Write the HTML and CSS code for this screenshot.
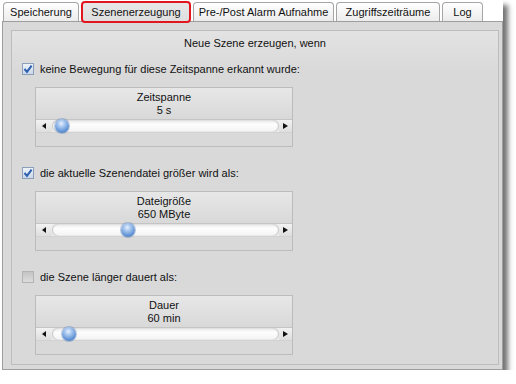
FILE: index.html
```html
<!DOCTYPE html>
<html lang="de">
<head>
  <meta charset="UTF-8" />
  <title>Szenenerzeugung</title>
  <link rel="stylesheet" href="styles.css">
</head>
<body>
  <div class="window">
    <div class="tabs">
      <div class="tab tab-store">Speicherung</div>
      <div class="tab active">Szenenerzeugung</div>
      <div class="tab tab-alarm">Pre-/Post Alarm Aufnahme</div>
      <div class="tab tab-access">Zugriffszeiträume</div>
      <div class="tab tab-log">Log</div>
    </div>

    <div class="panel">
      <div class="frame">
        <div class="frame-title">Neue Szene erzeugen, wenn</div>

        <!-- Zeitspanne -->
        <div class="option">
          <span class="check on"><svg width="10" height="10" viewBox="0 0 10 10"><path d="M1.5 5 L4 7.8 L8.6 1.6" /></svg></span>
          <span>keine Bewegung für diese Zeitspanne erkannt wurde:</span>
        </div>
        <div class="group">
          <div class="group-line">Zeitspanne</div>
          <div class="group-line">5 s</div>
          <div class="slider">
            <span class="step left"></span>
            <div class="track"><span class="thumb" style="left: 3px"></span></div>
            <span class="step right"></span>
          </div>
        </div>

        <!-- Dateigröße -->
        <div class="option">
          <span class="check on"><svg width="10" height="10" viewBox="0 0 10 10"><path d="M1.5 5 L4 7.8 L8.6 1.6" /></svg></span>
          <span>die aktuelle Szenendatei größer wird als:</span>
        </div>
        <div class="group">
          <div class="group-line">Dateigröße</div>
          <div class="group-line">650 MByte</div>
          <div class="slider">
            <span class="step left"></span>
            <div class="track"><span class="thumb" style="left: 69px"></span></div>
            <span class="step right"></span>
          </div>
        </div>

        <!-- Dauer -->
        <div class="option">
          <span class="check off"></span>
          <span>die Szene länger dauert als:</span>
        </div>
        <div class="group">
          <div class="group-line">Dauer</div>
          <div class="group-line">60 min</div>
          <div class="slider">
            <span class="step left"></span>
            <div class="track"><span class="thumb" style="left: 10px"></span></div>
            <span class="step right"></span>
          </div>
        </div>
      </div>
    </div>
  </div>
</body>
</html>
```

FILE: styles.css
```css
* { box-sizing: border-box; }

body {
  margin: 0;
  background: #fff;
  font-family: "Liberation Sans", Arial, sans-serif;
  font-size: 11px;
  color: #111;
}

.window {
  margin-left: 2px;
  width: 501px;
  height: 370px;
  display: flex;
  flex-direction: column;
  background: #fff;
  box-shadow: 5px 5px 5px rgba(0, 0, 0, 0.55);
}

/* tab strip */
.tabs {
  height: 21px;
  flex: none;
  display: flex;
  align-items: flex-end;
  gap: 2px;
  padding-left: 1px;
  position: relative;
  z-index: 1;
}
.tab {
  height: 19px;
  line-height: 18px;
  text-align: center;
  border: 1px solid #a6a6a6;
  border-bottom: 0;
  border-radius: 4px 4px 0 0;
  background: linear-gradient(#ffffff, #ececec);
  white-space: nowrap;
}
.tab-store { width: 76px; }
.tab-alarm { width: 141px; }
.tab-access { width: 104px; }
.tab-log { width: 41px; }
.tab.active {
  width: 110px;
  height: 22px;
  margin-bottom: -2px;
  border: 2px solid #e2171d;
  border-radius: 4px;
  background: linear-gradient(#e8e8e8, #dedede);
}

/* panel */
.panel {
  flex: 1;
  min-height: 0;
  background: #d9d9d9;
  border: 1px solid #9e9e9e;
  padding: 8px 3px 4px 8px;
}
.frame {
  height: 100%;
  border: 1px solid #bdbdbd;
  padding-top: 6px;
  background: linear-gradient(#e3e3e3, #d9d9d9 40px);
}
.frame-title {
  text-align: center;
  line-height: 13px;
  margin-bottom: 12px;
}

.option {
  display: flex;
  align-items: center;
  gap: 6px;
  height: 14px;
  margin-left: 10px;
}
.check {
  width: 12px;
  height: 12px;
  display: flex;
  align-items: center;
  justify-content: center;
}
.check.on {
  border: 1px solid #8d9fba;
  background: linear-gradient(#eef3fa, #c8d7ea);
}
.check.on path {
  fill: none;
  stroke: #2c5fae;
  stroke-width: 2;
}
.check.off {
  border: 1px solid #b3b3b3;
  background: linear-gradient(#c4c4c4, #dcdcdc);
}

/* slider groups */
.group {
  width: 258px;
  height: 60px;
  margin: 11px 0 19px 23px;
  padding-top: 3px;
  border: 1px solid #bcbcbc;
  background: linear-gradient(#e7e7e7, #d9d9d9 30px);
  text-align: center;
}
.group:last-child { margin-bottom: 0; }
.group-line { line-height: 13px; }

.slider {
  display: flex;
  height: 14px;
  margin-top: 2px;
  border-top: 1px solid #c4c4c4;
  border-bottom: 1px solid #d2d2d2;
  background: #ebebeb;
}
.step {
  width: 16px;
  display: flex;
  align-items: center;
  justify-content: center;
  background: linear-gradient(#f2f2f2, #dedede);
}
.step::before {
  content: "";
  border-top: 3px solid transparent;
  border-bottom: 3px solid transparent;
}
.step.left::before { border-right: 4px solid #111; }
.step.right { width: 13px; }
.step.right::before { border-left: 5px solid #111; }

.track {
  flex: 1;
  position: relative;
  border-radius: 7px;
  background: linear-gradient(#e6e6e6, #fdfdfd 35%, #f3f3f3);
  box-shadow: inset 1px 0 1px #c4c4c4, inset -1px 0 1px #c4c4c4;
}
.thumb {
  position: absolute;
  top: -1px;
  width: 14px;
  height: 14px;
  border-radius: 50%;
  background: radial-gradient(circle at 45% 32%, #e6f0fd 0, #a3c4ee 30%, #5a8dd0 70%, #3e6fb2 100%);
  box-shadow: 0 0 0 1px rgba(70, 110, 170, 0.35);
}
```
